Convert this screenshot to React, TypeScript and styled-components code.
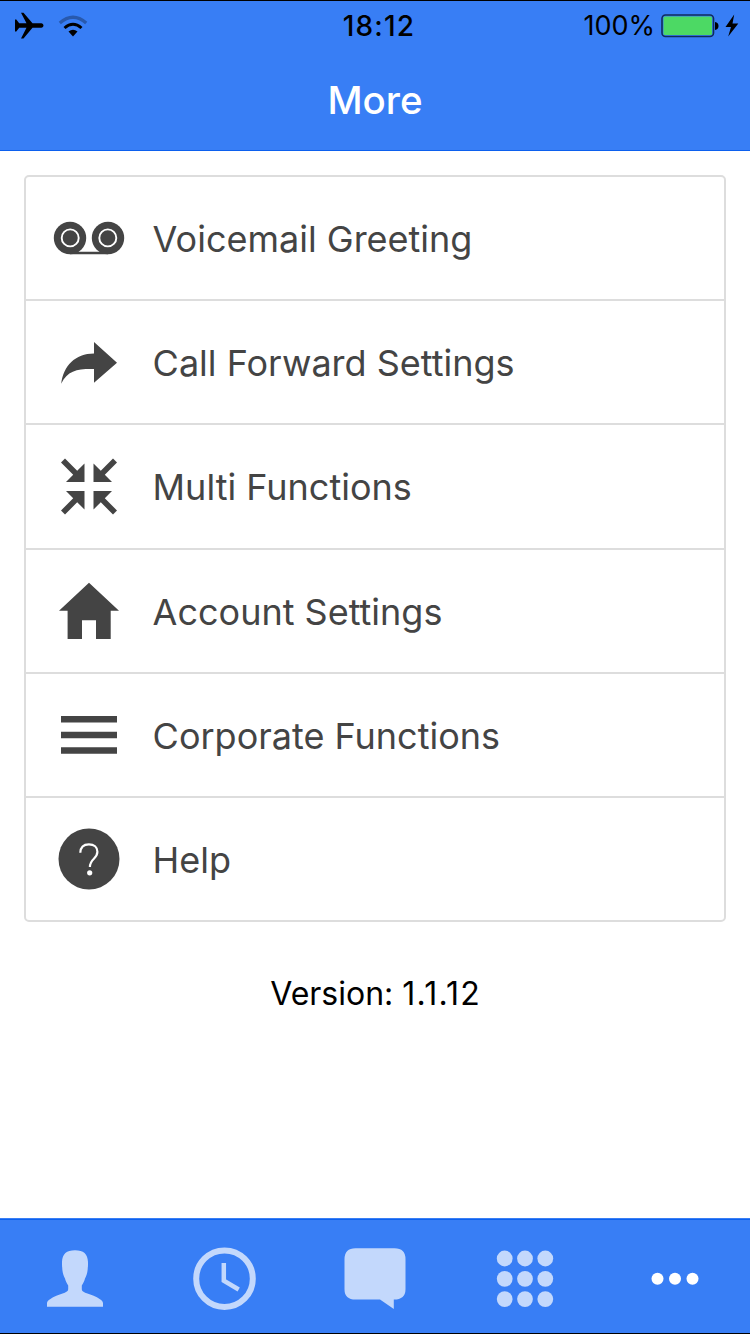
import React from 'react';
import styled, { createGlobalStyle } from 'styled-components';

const GlobalStyle = createGlobalStyle`
  * { box-sizing: border-box; }
  body { margin: 0; background: #fff; }
`;

const Screen = styled.div`
  display: flex;
  flex-direction: column;
  width: 750px;
  height: 1334px;
  overflow: hidden;
  background: #fff;
  color: #000;
  font-family: Inter, 'Liberation Sans', sans-serif;
`;

const Header = styled.header`
  flex: none;
  height: 151px;
  background: #387ef5;
  border-top: 1px solid #000;
  border-bottom: 1px solid #0c60ee;
`;

const StatusBar = styled.div`
  display: grid;
  grid-template-columns: 1fr auto 1fr;
  align-items: center;
  height: 50px;
  padding: 0 11px 0 14px;
`;

const StatusGroup = styled.div<{ $end?: boolean }>`
  display: flex;
  align-items: center;
  justify-content: ${p => (p.$end ? 'flex-end' : 'flex-start')};
`;

const Time = styled.span`
  font-size: 28px;
  font-weight: 500;
  letter-spacing: 1.2px;
  line-height: 50px;
  padding-left: 5px;
`;

const Percent = styled.span`
  font-size: 27px;
  line-height: 50px;
  margin-right: 6px;
`;

const Title = styled.h1`
  margin: 0;
  color: #fff;
  font-size: 38.5px;
  font-weight: 500;
  line-height: 98px;
  text-align: center;
`;

const Content = styled.main`
  flex: 1;
  padding: 24px 24px 0;
`;

const List = styled.ul`
  list-style: none;
  margin: 0;
  padding: 0;
  border: 2px solid #ddd;
  border-radius: 5px;
`;

const Row = styled.li`
  display: flex;
  align-items: center;
  height: 124.2px;
  border-bottom: 2px solid #ddd;
  color: #444;

  &:last-child {
    border-bottom: 0;
    height: 122.2px;
  }
`;

const RowIcon = styled.span`
  display: flex;
  justify-content: center;
  width: 126px;
  flex: none;
  padding-top: 0.6px;
`;

const Label = styled.span`
  font-size: 36px;
  line-height: 50px;
  padding: 2px 0 0 0.6px;
  white-space: nowrap;
`;

const Version = styled.p`
  margin: 52px 0 0;
  font-size: 32px;
  line-height: 40px;
  text-align: center;
`;

const VersionNumber = styled.span`
  letter-spacing: 1.2px;
  margin-right: -1.2px;
`;

const TabBar = styled.nav`
  flex: none;
  display: grid;
  grid-template-columns: repeat(5, 1fr);
  align-items: center;
  height: 116px;
  background: #387ef5;
  border-top: 1px solid #387ef5;
  border-bottom: 1px solid #000;
  box-shadow: inset 0 1px #0c60ee;
`;

const Tab = styled.a<{ $active?: boolean }>`
  display: flex;
  justify-content: center;
  padding-top: 5px;
  color: ${p => (p.$active ? '#fff' : '#c3d8fc')};
`;

/* 80x80 drawing, centred on 40,40 */
const Glyph = ({ children }: { children: React.ReactNode }) => (
  <svg width="80" height="80" viewBox="0 0 80 80" fill="currentColor">{children}</svg>
);

const VoicemailIcon = () => (
  <Glyph>
    <circle cx="21" cy="40" r="16.2" />
    <circle cx="59" cy="40" r="16.2" />
    <path d="M21 53.800h38v2.400H21z" />
    <g fill="none" stroke="#fff" strokeWidth="1.9">
      <circle cx="21.2" cy="39.900" r="8.5" />
      <circle cx="58.8" cy="39.900" r="8.5" />
    </g>
  </Glyph>
);

const ForwardIcon = () => (
  <Glyph>
    <path d="M45 19 68 39.700 45 59.700V46C29 45.700 18.500 47.200 12.200 60.700C14.500 42.700 26 30.700 45 30.500Z" />
  </Glyph>
);

const ContractIcon = () => (
  <Glyph>
    {[0, 90, 180, 270].map(a => (
      <path
        key={a}
        transform={`translate(0 -.5) rotate(${a} 40 40)`}
        d="M12 16 16 12 28.200 24.200 35.500 17V35.500H17L24.200 28.200Z"
      />
    ))}
  </Glyph>
);

const HomeIcon = () => (
  <Glyph>
    <path d="M40 11.800 70 39.700H61.700V68H47V49.200H33V68H18.600V39.700H10Z" />
  </Glyph>
);

const MenuIcon = () => (
  <Glyph>
    <path d="M12 21h56v6.500H12zM12 36.700h56v6.500H12zM12 52.300h56v6.500H12z" />
  </Glyph>
);

const HelpIcon = () => (
  <Glyph>
    <circle cx="40" cy="40" r="30.500" />
    <path
      d="M31.300 33.800C31.500 28.500 34.700 25.300 39.900 25.300C45 25.300 48.400 28.400 48.400 32.800C48.400 40 40.900 39.500 40.900 48"
      fill="none"
      stroke="#fff"
      strokeWidth="2.200"
    />
    <circle cx="40.700" cy="53.800" r="2.600" fill="#fff" />
  </Glyph>
);

const PersonIcon = () => (
  <Glyph>
    <path d="M12 67.800V64C12.300 62 13.500 61 15 60.200C19 57.500 23.500 56 28.300 54.300C33 52.500 33.200 51.500 33.200 49.500V46.500C31.800 44 30.500 42 30 39.500C28.500 37 27.300 33 27.200 28.500C26.900 27 27.100 25.500 27 23C27.300 15 31.500 11.300 40 11.300S52.700 15 53 23C52.900 25.500 53.100 27 52.800 28.500C52.700 33 51.500 37 50 39.500C49.500 42 48.200 44 46.800 46.500V49.500C46.800 51.500 47 52.500 51.700 54.300C56.500 56 61 57.500 65 60.200C66.500 61 67.700 62 68 64V67.800Z" />
  </Glyph>
);

const ClockIcon = () => (
  <Glyph>
    <g fill="none" stroke="currentColor">
      <circle cx="39.500" cy="39.700" r="28.300" strokeWidth="6" />
      <path d="M38.800 24V41.700L53.700 50.500" strokeWidth="4.500" />
    </g>
  </Glyph>
);

const ChatIcon = () => (
  <Glyph>
    <path d="M20.500 9.200H59.500Q70.500 9.200 70.500 20.200V50.200Q70.500 60.500 58.800 60.500V70L45 60.500H20.500Q9.500 60.500 9.500 50.200V20.200Q9.500 9.200 20.500 9.200Z" />
  </Glyph>
);

const KeypadIcon = () => (
  <Glyph>
    {[19.5, 39.8, 60.1].map(y =>
      [19.7, 40, 60.3].map(x => <circle key={`${x}-${y}`} cx={x} cy={y} r="7.900" />)
    )}
  </Glyph>
);

const MoreIcon = () => (
  <Glyph>
    {[22.5, 40, 57.5].map(x => <circle key={x} cx={x} cy="39.800" r="6" />)}
  </Glyph>
);

const AirplaneIcon = () => (
  <svg width="30" height="28" viewBox="0 0 30 28">
    <path d="M1 7.500H2.300L5.200 11.300H12.500L7 .8H9.500L18.500 11.300H27.500Q29.500 11.800 29.500 13.500T27.500 15.700H18.500L9.500 26.500H7L12.500 15.700H5.200L2.300 19.500H1Z" />
  </svg>
);

const WifiIcon = () => (
  <svg width="30" height="24" viewBox="0 0 30 24" fill="none" stroke="#000" strokeWidth="3">
    <path d="M1.800 9Q15-2.500 28.200 9" stroke="#2859ad" strokeWidth="3.200" />
    <path d="M6.500 14Q15 6.500 23.500 14" />
    <path d="M10.500 17.500Q15 14 19.500 17.500L15 22.500Z" fill="#000" stroke="none" />
  </svg>
);

const BatteryIcon = () => (
  <svg width="58" height="24" viewBox="0 0 58 24">
    <rect x="1" y="1" width="51.500" height="21.500" rx="3.500" fill="#387ef5" stroke="#102c5b" strokeWidth="1.600" />
    <rect x="2.500" y="2.500" width="48.500" height="18.500" rx="1.500" fill="#4cd964" />
    <path d="M54 8Q57.500 8.500 57.500 12T54 16Z" />
  </svg>
);

const BoltIcon = () => (
  <svg width="14" height="24" viewBox="0 0 14 24">
    <path d="M9.200 .5.500 13H6L3.200 22.500 13.300 9.500H7.500Z" />
  </svg>
);

const WifiSlot = styled.span`
  display: flex;
  margin-left: 14px;
`;

const BoltSlot = styled.span`
  display: flex;
  margin-left: 6px;
`;

const items = [
  { label: 'Voicemail Greeting', Icon: VoicemailIcon },
  { label: 'Call Forward Settings', Icon: ForwardIcon },
  { label: 'Multi Functions', Icon: ContractIcon },
  { label: 'Account Settings', Icon: HomeIcon },
  { label: 'Corporate Functions', Icon: MenuIcon },
  { label: 'Help', Icon: HelpIcon },
];

const tabs = [PersonIcon, ClockIcon, ChatIcon, KeypadIcon, MoreIcon];

export default function App() {
  return (
    <Screen>
      <GlobalStyle />
      <Header>
        <StatusBar>
          <StatusGroup>
            <AirplaneIcon />
            <WifiSlot><WifiIcon /></WifiSlot>
          </StatusGroup>
          <Time>18:12</Time>
          <StatusGroup $end>
            <Percent>100%</Percent>
            <BatteryIcon />
            <BoltSlot><BoltIcon /></BoltSlot>
          </StatusGroup>
        </StatusBar>
        <Title>More</Title>
      </Header>
      <Content>
        <List>
          {items.map(({ label, Icon }) => (
            <Row key={label}>
              <RowIcon><Icon /></RowIcon>
              <Label>{label}</Label>
            </Row>
          ))}
        </List>
        <Version>Version: <VersionNumber>1.1.12</VersionNumber></Version>
      </Content>
      <TabBar>
        {tabs.map((Icon, i) => (
          <Tab key={i} $active={i === 4}><Icon /></Tab>
        ))}
      </TabBar>
    </Screen>
  );
}
